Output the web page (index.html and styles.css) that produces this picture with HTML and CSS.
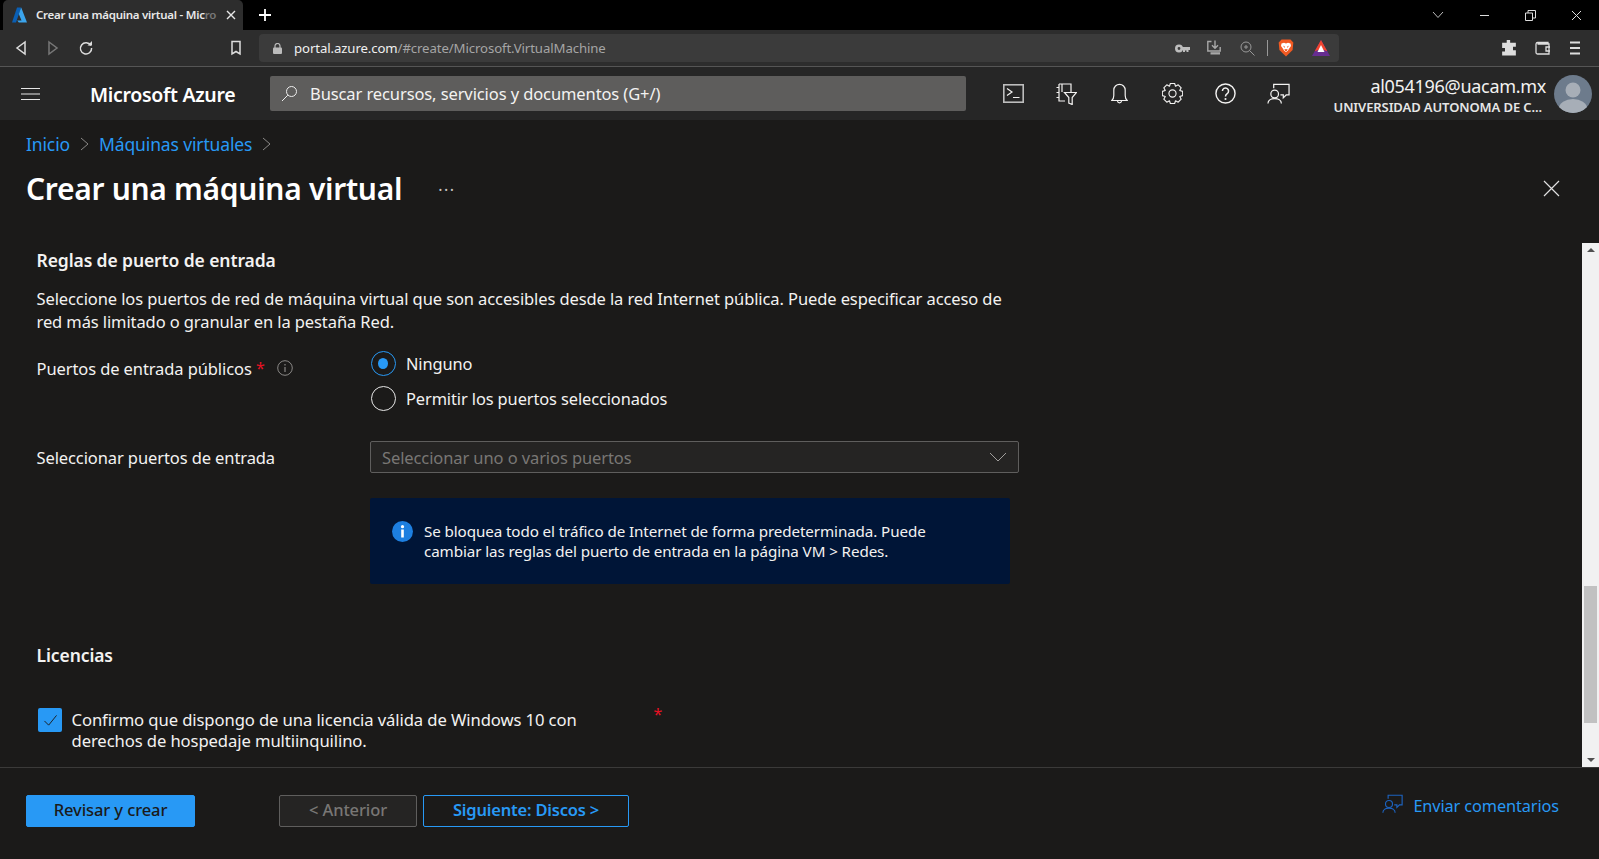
FILE: index.html
```html
<!DOCTYPE html>
<html lang="es">
  <head>
    <meta charset="UTF-8" />
    <title>Crear una máquina virtual - Microsoft Azure</title>
    <link rel="stylesheet" href="styles.css">
  </head>
  <body>
    <div class="tabstrip">
      <div class="tab">
        <svg class="tab-logo" width="15" height="16" viewBox="0 0 15 16"><path d="M5 .5h4.200L4 15.500H0z" fill="#0a5fb4"/><path d="M9.200 .5 15 15.500H6.800L5.200 13.500h4.300L6.800 7z" fill="#3ba4ec"/></svg>
        <span class="tab-title">Crear una máquina virtual - Mic<span class="tab-fade">ro</span></span>
        <svg class="tab-close" width="10" height="10" viewBox="0 0 10 10"><path d="M1 1l8 8M9 1l-8 8" stroke="#e8e8e8" stroke-width="1.400"/></svg>
      </div>
      <svg class="new-tab" width="14" height="14" viewBox="0 0 14 14"><path d="M7 1v12M1 7h12" stroke="#fff" stroke-width="1.800"/></svg>
      <div class="win-controls">
        <svg width="12" height="8" viewBox="0 0 12 8"><path d="M1 1l5 5.500L11 1" fill="none" stroke="#bbb"/></svg>
        <svg width="11" height="11" viewBox="0 0 11 11"><path d="M1 5.500h9" stroke="#ddd" stroke-width="1"/></svg>
        <svg width="11" height="11" viewBox="0 0 11 11"><path d="M.5 3h7v7.500h-7zM3 3V.5h7.500V8H8" fill="none" stroke="#ddd"/></svg>
        <svg width="11" height="11" viewBox="0 0 11 11"><path d="M1 1l9 9M10 1l-9 9" stroke="#ddd"/></svg>
      </div>
    </div>

    <div class="toolbar">
      <div class="nav-btns">
        <svg width="14" height="16" viewBox="0 0 14 16"><path d="M11 2 3 8l8 6z" fill="none" stroke="#ddd" stroke-width="1.500"/></svg>
        <svg width="14" height="16" viewBox="0 0 14 16"><path d="M3 2l8 6-8 6z" fill="none" stroke="#777" stroke-width="1.500"/></svg>
        <svg width="16" height="16" viewBox="0 0 16 16"><path d="M12.800 5.500A5.600 5.600 0 1 0 13.600 8" fill="none" stroke="#ddd" stroke-width="1.500"/><path d="M9.500 5.500h4.500V1z" fill="#ddd"/></svg>
      </div>
      <svg class="bookmark" width="12" height="16" viewBox="0 0 12 16"><path d="M2 1.500h8v12.500l-4-2.500-4 2.500z" fill="none" stroke="#ddd" stroke-width="1.500"/></svg>
      <div class="urlbar">
        <svg class="lock" width="9" height="11" viewBox="0 0 9 11"><path d="M2 5V3a2.500 2.500 0 0 1 5 0v2" fill="none" stroke="#bbb" stroke-width="1.200"/><rect y="4.500" width="9" height="6.500" rx="1" fill="#bbb"/></svg>
        <span class="url"><b>portal.azure.com</b>/#create/Microsoft.VirtualMachine</span>
        <div class="url-icons">
          <svg width="15" height="9" viewBox="0 0 15 9"><circle cx="4" cy="4.500" r="2.700" fill="none" stroke="#bdbdbd" stroke-width="2.600"/><path d="M7 3h8v3h-1.500v2h-2V6.500H10V8H8V6H7z" fill="#bdbdbd"/></svg>
          <svg class="ic-save" width="16" height="16" viewBox="0 0 16 16"><path d="M4.500 1.500H.8V11h12.400V7M8 .5V8M5 5.200 8 8.200l3-3" fill="none" stroke="#a8a8a8" stroke-width="1.400"/><path d="M3.500 12.200h9.500v2.300H3.500z" fill="#a8a8a8"/></svg>
          <svg class="ic-zoom" width="15" height="15" viewBox="0 0 15 15"><circle cx="6" cy="6" r="5" fill="none" stroke="#999"/><path d="M9.500 9.500l5 5M4 6h4M6 4v4" stroke="#999"/></svg>
          <span class="url-sep"></span>
          <svg class="ic-brave" width="16" height="18" viewBox="0 0 16 18"><path d="M3.500.5h9L15.300 3.500l-.7 7.500L8 17.500 1.400 11 .7 3.500z" fill="#f15a22"/><path d="M3.500 4.500 6 3.800 8 4.500l2-.7 2.500.7L13 7l-2 2.800-1 1.700-2 1.500-2-1.500-1-1.700L3 7z" fill="#fff"/><path d="M5.500 7.300 7 8.300M10.500 7.300 9 8.300M6.800 10.700h2.400L8 12z" fill="none" stroke="#f15a22"/></svg>
          <svg class="ic-rewards" width="18" height="16" viewBox="0 0 18 16"><path d="M9 0 18 16H0z" fill="#662d91"/><path d="M9 0 15.300 11.200 9 9 2.700 11.200z" fill="#f0442e"/><path d="M9 5 12.500 12H5.500z" fill="#fff"/></svg>
        </div>
      </div>
      <div class="tool-right">
        <svg width="16" height="16" viewBox="0 0 14 14"><path d="M5 0h3v2.500h5V6h-2.500v3H13v4.500H1V10h2.500V7H1V2.500h4z" fill="#ddd"/></svg>
        <svg width="16" height="14" viewBox="0 0 16 14"><path d="M13 3V1.500H3A1.800 1.800 0 0 0 1 3v8.500A1.500 1.500 0 0 0 2.500 13h11.500V3H2.500M15 6h-4v4h4" fill="none" stroke="#ddd" stroke-width="1.300"/></svg>
        <svg width="12" height="14" viewBox="0 0 12 14"><path d="M1 1.500h10M1 7h10M1 12.500h10" stroke="#ddd" stroke-width="2"/></svg>
      </div>
    </div>

    <header class="azure-bar">
      <svg class="hamburger" width="19" height="14" viewBox="0 0 19 14"><path d="M0 1.500h19M0 7h19M0 12.500h19" stroke="#e6e6e6"/></svg>
      <span class="brand">Microsoft Azure</span>
      <div class="search">
        <svg width="17" height="17" viewBox="0 0 17 17"><circle cx="10.500" cy="6.500" r="5" fill="none" stroke="#eee"/><path d="M6.800 10.200 1 16" stroke="#eee"/></svg>
        <span>Buscar recursos, servicios y documentos (G+/)</span>
      </div>
      <div class="header-icons">
        <svg width="21" height="19" viewBox="0 0 21 19"><rect x=".8" y=".8" width="19.400" height="17.400" fill="none" stroke="#bdbdbd" stroke-width="1.600"/><path d="M4 4.500 9 8 4 11.500M10 13.500h6.500" fill="none" stroke="#f3f2f1" stroke-width="1.200"/></svg>
        <svg width="21" height="22" viewBox="0 0 21 22"><path d="M3 1h12v8M3 1v17h6M.5 4.500H3M.5 9.500H3M.5 14.500H3M6 1v8M8.500 9.500h12l-4.300 5V21.500l-3.400-1.500v-5.500z" fill="none" stroke="#f3f2f1" stroke-width="1.200"/></svg>
        <svg width="17" height="22" viewBox="0 0 17 22"><path d="M.8 17.500c1.200-1 2-2 2-5V7a5.700 5.700 0 0 1 11.400 0v5.500c0 3 .8 4 2 5zM6.500 18c.3 2.500 3.700 2.500 4 0" fill="none" stroke="#f3f2f1" stroke-width="1.200"/></svg>
        <svg width="21" height="21" viewBox="0 0 20 20"><polygon points="19.700,8 19.700,12 16.900,12.900 18.270,15.440 15.440,18.270 12.900,16.900 12,19.700 8,19.700 7.100,16.900 4.560,18.270 1.730,15.440 3.100,12.900 .3,12 .3,8 3.100,7.100 1.730,4.560 4.560,1.730 7.100,3.100 8,.3 12,.3 12.900,3.100 15.440,1.730 18.270,4.560 16.900,7.100" fill="none" stroke="#f3f2f1" stroke-width="1.100" stroke-linejoin="round"/><circle cx="10" cy="10" r="3.400" fill="none" stroke="#f3f2f1" stroke-width="1.100"/></svg>
        <svg width="21" height="21" viewBox="0 0 22 22"><circle cx="11" cy="11" r="10" fill="none" stroke="#f3f2f1" stroke-width="1.500"/><path d="M7.800 8.500a3.200 3.200 0 1 1 5 2.600c-1.200.8-1.800 1.400-1.800 3" fill="none" stroke="#f3f2f1" stroke-width="1.600"/><circle cx="11" cy="16.700" r="1.100" fill="#f3f2f1"/></svg>
        <svg width="23" height="22" viewBox="0 0 24 22"><path d="M7 5V1h16v11h-3l-3 3v-3h-3" fill="none" stroke="#f3f2f1" stroke-width="1.300"/><circle cx="8" cy="11" r="4" fill="none" stroke="#f3f2f1" stroke-width="1.300"/><path d="M1 21c0-7 14-7 14 0" fill="none" stroke="#f3f2f1" stroke-width="1.300"/></svg>
      </div>
      <div class="account">
        <span class="account-mail">al054196@uacam.mx</span>
        <span class="account-org">UNIVERSIDAD AUTONOMA DE C...</span>
      </div>
      <svg class="avatar" width="38" height="38" viewBox="0 0 38 38"><defs><clipPath id="avatarClip"><circle cx="19" cy="19" r="19"/></clipPath></defs><circle cx="19" cy="19" r="19" fill="#6d7b8c"/><g clip-path="url(#avatarClip)" fill="#a7aeb7"><circle cx="19" cy="15" r="7.500"/><ellipse cx="19" cy="33" rx="14" ry="9"/></g></svg>
    </header>

    <main class="blade">
      <nav class="breadcrumb">
        <a>Inicio</a>
        <svg width="9" height="14" viewBox="0 0 9 14"><path d="M1 1l7 6-7 6" fill="none" stroke="#8a8886"/></svg>
        <a>Máquinas virtuales</a>
        <svg width="9" height="14" viewBox="0 0 9 14"><path d="M1 1l7 6-7 6" fill="none" stroke="#8a8886"/></svg>
      </nav>
      <div class="title-row">
        <h1>Crear una máquina virtual</h1>
        <span class="more">···</span>
        <svg class="blade-close" width="17" height="17" viewBox="0 0 17 17"><path d="M1 1l15 15M16 1 1 16" stroke="#e0e0e0" stroke-width="1.200"/></svg>
      </div>

      <div class="content">
        <div class="form">
          <h2 class="sec-ports">Reglas de puerto de entrada</h2>
          <p class="intro">Seleccione los puertos de red de máquina virtual que son accesibles desde la red Internet pública. Puede especificar acceso de red más limitado o granular en la pestaña Red.</p>

          <div class="row row-ports">
            <div class="label">Puertos de entrada públicos <span class="req">*</span>
              <svg class="info-tip" width="16" height="16" viewBox="0 0 16 16"><circle cx="8" cy="8" r="7.300" fill="none" stroke="#8a8886"/><path d="M8 7v5M8 4v1.500" stroke="#8a8886" stroke-width="1.200"/></svg>
            </div>
            <div class="radios">
              <div class="radio-item"><span class="radio radio-on"></span>Ninguno</div>
              <div class="radio-item"><span class="radio"></span>Permitir los puertos seleccionados</div>
            </div>
          </div>

          <div class="row row-select">
            <div class="label">Seleccionar puertos de entrada</div>
            <div class="select">
              <span>Seleccionar uno o varios puertos</span>
              <svg width="18" height="10" viewBox="0 0 18 10"><path d="M1 1l8 8 8-8" fill="none" stroke="#a19f9d"/></svg>
            </div>
          </div>

          <div class="info-box">
            <svg width="21" height="21" viewBox="0 0 21 21"><circle cx="10.500" cy="10.500" r="10.500" fill="#1d7fe0"/><rect x="9.200" y="8.500" width="2.600" height="8" fill="#fff"/><circle cx="10.500" cy="5.700" r="1.600" fill="#fff"/></svg>
            <p>Se bloquea todo el tráfico de Internet de forma predeterminada. Puede cambiar las reglas del puerto de entrada en la página VM &gt; Redes.</p>
          </div>

          <h2 class="sec-lic">Licencias</h2>

          <div class="license">
            <span class="checkbox"><svg width="15" height="13" viewBox="0 0 16 14"><path d="M1.500 7.500 6 12 14.500 1.500" fill="none" stroke="#1b1a19" stroke-width="1"/></svg></span>
            <p>Confirmo que dispongo de una licencia válida de Windows 10 con derechos de hospedaje multiinquilino.</p>
            <span class="req lic-req">*</span>
          </div>
        </div>

        <div class="scrollbar">
          <span class="arrow-up"></span>
          <span class="thumb"></span>
          <span class="arrow-down"></span>
        </div>
      </div>

      <footer class="footer">
        <button class="btn btn-primary">Revisar y crear</button>
        <button class="btn btn-prev">&lt; Anterior</button>
        <button class="btn btn-next">Siguiente: Discos &gt;</button>
        <a class="feedback">
          <svg class="feedback-icon" width="21" height="20" viewBox="0 0 24 22"><path d="M7 5V1h16v11h-3l-3 3v-3h-3" fill="none" stroke="#1d63c0" stroke-width="1.300"/><circle cx="8" cy="11" r="4" fill="none" stroke="#1d63c0" stroke-width="1.300"/><path d="M1 21c0-7 14-7 14 0" fill="none" stroke="#1d63c0" stroke-width="1.300"/></svg>
          Enviar comentarios
        </a>
      </footer>
    </main>
  </body>
</html>
```

FILE: styles.css
```css
* {
  box-sizing: border-box;
}
html,
body {
  height: 100%;
}
body {
  margin: 0;
  display: flex;
  flex-direction: column;
  height: 859px;
  overflow: hidden;
  background-color: #1b1a19;
  color: #f3f2f1;
  font-family: "Noto Sans", "Open Sans", sans-serif;
}
svg {
  display: block;
  flex: none;
}

/* browser chrome */
.tabstrip {
  height: 30px;
  background-color: #000;
  display: flex;
  align-items: center;
}
.tab {
  width: 240px;
  height: 30px;
  margin-left: 3px;
  padding: 0 7px 0 9px;
  background-color: #2d2d2d;
  border-radius: 5px 5px 0 0;
  display: flex;
  align-items: center;
}
.tab-title {
  margin: 0 0 2px 9px;
  font-size: 11.500px;
  font-weight: 600;
  white-space: nowrap;
  color: #e8e8e8;
  letter-spacing: -0.25px;
}
.tab-fade {
  color: #777;
}
.tab-close {
  margin-left: auto;
}
.new-tab {
  margin-left: 15px;
}
.win-controls {
  margin-left: auto;
  height: 30px;
  display: flex;
  align-items: center;
  gap: 35px;
  padding-right: 17px;
}
.toolbar {
  height: 37px;
  background-color: #2d2d2d;
  border-bottom: 1px solid #555;
  display: flex;
  align-items: center;
}
.nav-btns {
  display: flex;
  align-items: center;
  gap: 18px;
  margin-left: 14px;
}
.bookmark {
  margin-left: 136px;
}
.urlbar {
  width: 1080px;
  height: 28px;
  margin-left: 17px;
  padding-left: 14px;
  background-color: #3b3b3b;
  border-radius: 4px;
  display: flex;
  align-items: center;
}
.url {
  margin-left: 12px;
  font-size: 13.200px;
  color: #a5a5a5;
  letter-spacing: -0.1px;
}
.url b {
  font-weight: 400;
  color: #f0f0f0;
}
.url-icons {
  margin-left: auto;
  margin-right: 9px;
  display: flex;
  align-items: center;
}
.ic-save {
  margin-left: 17px;
}
.ic-zoom {
  margin-left: 17px;
}
.url-sep {
  width: 1px;
  height: 16px;
  margin: 0 10px 0 12px;
  background-color: #999;
}
.ic-rewards {
  margin-left: 18px;
}
.tool-right {
  display: flex;
  align-items: center;
  gap: 18px;
  margin-left: 162px;
}

/* azure header */
.azure-bar {
  height: 53px;
  background-color: #262626;
  display: flex;
  align-items: center;
}
.hamburger {
  margin-left: 21px;
}
.brand {
  margin: 2px 0 0 50px;
  width: 180px;
  font-size: 19.500px;
  font-weight: 600;
  color: #fff;
  white-space: nowrap;
  letter-spacing: -0.3px;
}
.search {
  width: 696px;
  height: 35px;
  padding-left: 11px;
  background-color: #5e5d5c;
  border-radius: 2px;
  display: flex;
  align-items: center;
  gap: 12px;
  font-size: 16.500px;
  color: #f3f2f1;
  letter-spacing: -0.1px;
}
.header-icons {
  display: grid;
  grid-template-columns: repeat(6, 53px);
  justify-items: center;
  align-items: center;
  margin-left: 21px;
}
.account {
  margin-left: auto;
  padding-top: 3px;
  display: flex;
  flex-direction: column;
  align-items: flex-end;
}
.account-mail {
  font-size: 18px;
  line-height: 23px;
  color: #f3f2f1;
  letter-spacing: -0.3px;
}
.account-org {
  font-size: 13px;
  font-weight: 600;
  line-height: 18px;
  color: #e6e6e6;
  margin-right: 4px;
  letter-spacing: -0.1px;
}
.avatar {
  margin: 0 7px 0 8px;
}

/* blade */
.blade {
  flex: 1;
  display: flex;
  flex-direction: column;
  min-height: 0;
}
.breadcrumb {
  height: 48px;
  padding: 0 0 0 26px;
  display: flex;
  align-items: center;
  gap: 10px;
  font-size: 17.500px;
  color: #2899f5;
  letter-spacing: -0.13px;
}
.title-row {
  height: 75px;
  padding: 0 39px 34px 26px;
  display: flex;
  align-items: center;
}
h1 {
  margin: 0;
  font-size: 30px;
  font-weight: 600;
  color: #fff;
  white-space: nowrap;
  letter-spacing: -0.3px;
}
.more {
  margin: 2px 0 0 36px;
  font-size: 16px;
  letter-spacing: 1.500px;
  color: #c8c6c4;
}
.blade-close {
  margin-left: auto;
}
.content {
  flex: 1;
  display: flex;
  min-height: 0;
}
.form {
  flex: 1;
  padding-left: 36.500px;
  min-width: 0;
}
h2 {
  margin: 0;
  font-size: 17.500px;
  font-weight: 600;
  line-height: 24px;
  color: #f3f2f1;
  letter-spacing: -0.1px;
}
.sec-ports {
  margin-top: 5px;
}
.intro {
  margin: 16px 0 0;
  width: 980px;
  font-size: 16.500px;
  line-height: 22.500px;
  letter-spacing: -0.1px;
}
.row {
  display: flex;
}
.label {
  width: 333.500px;
  font-size: 16.500px;
  letter-spacing: -0.1px;
  display: flex;
  align-items: center;
  flex: none;
  white-space: pre-wrap;
}
.row-ports {
  margin-top: 18px;
  align-items: flex-start;
}
.row-ports .label {
  height: 34px;
}
.req {
  color: #e81123;
  font-size: 16px;
}
.info-tip {
  margin-left: 12px;
}
.radios {
  display: flex;
  flex-direction: column;
  gap: 10px;
}
.radio-item {
  height: 25px;
  display: flex;
  align-items: center;
  gap: 10px;
  font-size: 16.400px;
  letter-spacing: -0.1px;
}
.radio {
  width: 25px;
  height: 25px;
  margin-left: 1px;
  border: 1.500px solid #e6e6e6;
  border-radius: 50%;
  display: block;
  flex: none;
}
.radio-on {
  border-color: #2899f5;
  position: relative;
}
.radio-on::after {
  content: "";
  position: absolute;
  left: 6px;
  top: 5.500px;
  width: 10px;
  height: 11px;
  border-radius: 50%;
  background-color: #2899f5;
}
.row-select {
  margin-top: 30px;
  align-items: center;
}
.select {
  width: 649px;
  height: 32px;
  padding: 0 11px;
  background-color: #252423;
  border: 1px solid #5f5e5d;
  border-radius: 2px;
  display: flex;
  align-items: center;
  justify-content: space-between;
  font-size: 16.500px;
  color: #797775;
  letter-spacing: -0.1px;
}
.info-box {
  width: 640px;
  height: 86px;
  margin: 25px 0 0 333.500px;
  padding: 23px 60px 0 22px;
  background-color: #001537;
  border-radius: 2px;
  display: flex;
  gap: 11px;
  font-size: 15.200px;
  line-height: 20px;
}
.info-box p {
  margin: 0;
  letter-spacing: -0.1px;
}
.sec-lic {
  margin-top: 59px;
}
.license {
  margin-top: 41px;
  display: flex;
  position: relative;
}
.checkbox {
  width: 24px;
  height: 24px;
  margin: 0 9.500px 0 1.500px;
  background-color: #2899f5;
  border-radius: 2px;
  display: flex;
  align-items: center;
  justify-content: center;
  flex: none;
}
.license p {
  margin: 1px 0 0;
  width: 525px;
  font-size: 16.650px;
  line-height: 21px;
  letter-spacing: -0.1px;
}
.lic-req {
  position: absolute;
  left: 617px;
  top: -5px;
}
.scrollbar {
  width: 17px;
  background-color: #f1f1f1;
  display: flex;
  flex-direction: column;
  align-items: center;
  flex: none;
}
.arrow-up {
  margin-top: 5px;
  border-left: 4px solid transparent;
  border-right: 4px solid transparent;
  border-bottom: 4px solid #505050;
}
.thumb {
  width: 13px;
  height: 137px;
  margin-top: 334px;
  background-color: #c1c1c1;
}
.arrow-down {
  margin-top: auto;
  margin-bottom: 5px;
  border-left: 4px solid transparent;
  border-right: 4px solid transparent;
  border-top: 4px solid #505050;
}

/* footer */
.footer {
  height: 92px;
  border-top: 1px solid #3b3a39;
  padding: 27px 40px 0 26px;
  display: flex;
  align-items: flex-start;
}
.btn {
  height: 32px;
  padding: 0 0 3px;
  border-radius: 2px;
  font-family: inherit;
  font-size: 16.500px;
  font-weight: 500;
  letter-spacing: -0.1px;
}
.btn-primary {
  width: 169px;
  background-color: #2899f5;
  border: 1px solid #2899f5;
  color: #1b1a19;
}
.btn-prev {
  width: 138px;
  margin-left: 84px;
  background-color: #252423;
  border: 1px solid #5f5e5d;
  color: #797775;
}
.btn-next {
  width: 206px;
  margin-left: 6px;
  background-color: #1b1a19;
  border: 1px solid #2899f5;
  color: #2899f5;
  font-weight: 600;
  letter-spacing: -0.2px;
}
.feedback {
  margin-left: auto;
  display: flex;
  align-items: center;
  gap: 10px;
  font-size: 16.300px;
  color: #2899f5;
  letter-spacing: -0.1px;
}
.feedback-icon {
  margin-top: -4px;
}
```
